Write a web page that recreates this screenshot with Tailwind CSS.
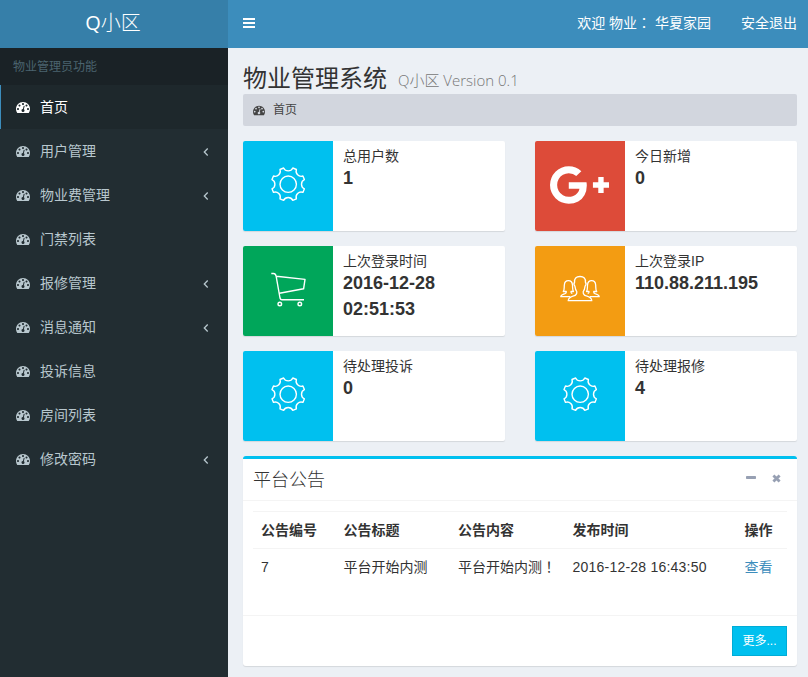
<!DOCTYPE html>
<html lang="zh-CN">
<head>
<meta charset="utf-8">
<title>Q小区</title>
<script src="https://cdn.jsdelivr.net/npm/@tailwindcss/browser@4"></script>
</head>
<body class="h-[677px] w-[808px] overflow-hidden bg-[#ecf0f5] font-['Liberation_Sans','Noto_Sans_CJK_SC',sans-serif] text-[14px] leading-[20px] text-[#333]">
<svg class="hidden">
  <symbol id="dash" viewBox="0 0 1792 1792"><path d="M384 1152q0-53-37.5-90.5t-90.5-37.5-90.5 37.5-37.5 90.5 37.5 90.5 90.5 37.5 90.5-37.5 37.5-90.5zm192-448q0-53-37.5-90.5t-90.5-37.5-90.5 37.5-37.5 90.5 37.5 90.5 90.5 37.5 90.5-37.5 37.5-90.5zm428 481l101-382q6-26-7.5-48.5t-38.5-29.5-48 6.5-30 39.5l-101 382q-60 5-107 43.5t-63 98.5q-20 77 20 146t117 89 146-20 89-117q16-60-6-117t-72-91zm660-33q0-53-37.5-90.5t-90.5-37.5-90.5 37.5-37.5 90.5 37.5 90.5 90.5 37.5 90.5-37.5 37.5-90.5zm-640-640q0-53-37.5-90.5t-90.5-37.5-90.5 37.5-37.5 90.5 37.5 90.5 90.5 37.5 90.5-37.5 37.5-90.5zm448 192q0-53-37.5-90.5t-90.5-37.5-90.5 37.5-37.5 90.5 37.5 90.5 90.5 37.5 90.5-37.5 37.5-90.5zm320 448q0 261-141 483-19 29-54 29h-1402q-35 0-54-29-141-221-141-483 0-182 71-348t191-286 286-191 348-71 348 71 286 191 191 286 71 348z"/></symbol>
  <symbol id="left" viewBox="0 0 6 10"><path d="M4.7 1.5 1.3 5l3.4 3.5" fill="none" stroke="currentColor" stroke-width="1.3"/></symbol>
  <symbol id="gear" viewBox="-45 -45 90 90"><g fill="none" stroke="#fff" stroke-width="1.4" stroke-linejoin="round" transform="translate(.2 -1.8)"><circle r="8.2"/><path d="M-4.6-16.2A5.1 5.1 0 0 0 4.6-16.2L8.2-14.7A5.1 5.1 0 0 0 14.7-8.2L16.200-4.6A5.1 5.1 0 0 0 16.2 4.6L14.7 8.2A5.1 5.1 0 0 0 8.2 14.7L4.6 16.2A5.1 5.1 0 0 0-4.6 16.2L-8.2 14.7A5.1 5.1 0 0 0-14.7 8.2L-16.2 4.6A5.1 5.1 0 0 0-16.2-4.6L-14.7-8.2A5.1 5.1 0 0 0-8.2-14.7Z"/></g></symbol>
</svg>

<div class="flex h-full flex-col">
  <header class="flex h-12 shrink-0 text-white">
    <div class="flex w-[228px] items-center justify-center bg-[#367fa9] pb-[2px] pr-[2px] font-['Open_Sans','Noto_Sans_CJK_SC',sans-serif] text-[20px] font-light"><span class="font-normal">Q</span>小区</div>
    <div class="flex flex-1 items-center justify-between bg-[#3c8dbc] pl-[15px] pr-[11px]">
      <svg class="mt-[-2px] h-[10px] w-3" viewBox="0 0 12 10" fill="#fff"><path d="M0 0h12v2H0zM0 4h12v2H0zM0 8h12v2H0z"/></svg>
      <div class="flex gap-[30px] pb-[2px]"><span class="whitespace-pre">欢迎 物业<span lang="zh-TW" class="font-['Noto_Sans_CJK_TC',sans-serif] leading-none">：</span> 华夏家园</span><span>安全退出</span></div>
    </div>
  </header>

  <div class="flex min-h-0 flex-1">
    <aside class="w-[228px] shrink-0 bg-[#222d32] text-[#b8c7ce]">
      <div class="flex h-[37px] items-center bg-[#1a2226] pl-[13px] text-[12px] text-[#4b646f]">物业管理员功能</div>
      <nav>
        <a class="flex h-11 items-center border-l border-[#3c8dbc] bg-[#1e282c] pl-[15px] pr-[19px] text-white"><svg class="mr-[10px] h-[14px] w-[14px] fill-current"><use href="#dash"/></svg><span class="flex-1">首页</span></a>
        <a class="flex h-11 items-center pl-4 pr-[19px]"><svg class="mr-[10px] h-[14px] w-[14px] fill-current"><use href="#dash"/></svg><span class="flex-1">用户管理</span><svg class="mt-px h-[10px] w-[6px]"><use href="#left"/></svg></a>
        <a class="flex h-11 items-center pl-4 pr-[19px]"><svg class="mr-[10px] h-[14px] w-[14px] fill-current"><use href="#dash"/></svg><span class="flex-1">物业费管理</span><svg class="mt-px h-[10px] w-[6px]"><use href="#left"/></svg></a>
        <a class="flex h-11 items-center pl-4 pr-[19px]"><svg class="mr-[10px] h-[14px] w-[14px] fill-current"><use href="#dash"/></svg><span class="flex-1">门禁列表</span></a>
        <a class="flex h-11 items-center pl-4 pr-[19px]"><svg class="mr-[10px] h-[14px] w-[14px] fill-current"><use href="#dash"/></svg><span class="flex-1">报修管理</span><svg class="mt-px h-[10px] w-[6px]"><use href="#left"/></svg></a>
        <a class="flex h-11 items-center pl-4 pr-[19px]"><svg class="mr-[10px] h-[14px] w-[14px] fill-current"><use href="#dash"/></svg><span class="flex-1">消息通知</span><svg class="mt-px h-[10px] w-[6px]"><use href="#left"/></svg></a>
        <a class="flex h-11 items-center pl-4 pr-[19px]"><svg class="mr-[10px] h-[14px] w-[14px] fill-current"><use href="#dash"/></svg><span class="flex-1">投诉信息</span></a>
        <a class="flex h-11 items-center pl-4 pr-[19px]"><svg class="mr-[10px] h-[14px] w-[14px] fill-current"><use href="#dash"/></svg><span class="flex-1">房间列表</span></a>
        <a class="flex h-11 items-center pl-4 pr-[19px]"><svg class="mr-[10px] h-[14px] w-[14px] fill-current"><use href="#dash"/></svg><span class="flex-1">修改密码</span><svg class="mt-px h-[10px] w-[6px]"><use href="#left"/></svg></a>
      </nav>
    </aside>

    <main class="flex-1 pl-[15px] pr-[11px] pt-[15px]">
      <h1 class="flex h-[31px] items-baseline font-['Open_Sans','Noto_Sans_CJK_SC',sans-serif] text-[24px] leading-[30px]">物业管理系统<small class="relative top-[-1px] ml-[11px] text-[15px] font-light text-[#777]">Q小区 Version 0.1</small></h1>
      <div class="flex h-8 items-center rounded-[2px] bg-[#d2d6de] pl-[10px] text-[12px] text-[#444]"><svg class="mr-2 h-3 w-3 fill-current"><use href="#dash"/></svg><span>首页</span></div>

      <section class="mt-[15px] grid grid-cols-2 gap-x-[30px] gap-y-[15px]">
        <div class="flex h-[90px] overflow-hidden rounded-[2px] bg-white shadow-[0_1px_1px_rgba(0,0,0,0.1)]">
          <svg class="h-[90px] w-[90px] bg-[#00c0ef]"><use href="#gear"/></svg>
          <div class="flex-1 px-[10px] pt-[5px]"><div>总用户数</div><b class="-mt-px block text-[18px] leading-[26px]">1</b></div>
        </div>
        <div class="flex h-[90px] overflow-hidden rounded-[2px] bg-white shadow-[0_1px_1px_rgba(0,0,0,0.1)]">
          <div class="flex w-[90px] items-center justify-center bg-[#dd4b39] pb-[3px] pr-px"><svg class="h-[46px] w-[59px]" viewBox="0 0 2304 1792" fill="#fff"><path d="M1437 913q0 208-87 370.5t-248 254-369 91.5q-149 0-285-58t-234-156-156-234-58-285 58-285 156-234 234-156 285-58q286 0 491 192l-199 191q-117-113-292-113-123 0-227.5 62t-165.5 168.5-61 232.5 61 232.5 165.5 168.5 227.5 62q83 0 152.5-23t114.5-57.5 78.5-78.5 49-83 21.5-74h-416v-252h692q12 63 12 122zm867-122v210h-209v209h-210v-209h-209v-210h209v-209h210v209h209z"/></svg></div>
          <div class="flex-1 px-[10px] pt-[5px]"><div>今日新增</div><b class="-mt-px block text-[18px] leading-[26px]">0</b></div>
        </div>
        <div class="flex h-[90px] overflow-hidden rounded-[2px] bg-white shadow-[0_1px_1px_rgba(0,0,0,0.1)]">
          <svg class="h-[90px] w-[90px] bg-[#00a65a]" viewBox="0 0 90 90" fill="none" stroke="#fff" stroke-width="1.4" stroke-linejoin="round"><path d="M28.3 27.5h2.2q2 0 2.6 2.5L37 52q.4 1.8 2 1.8h22M33.4 30.2 62 33.4 60.6 42.8 36.5 47.3"/><circle cx="36.8" cy="58" r="1.8"/><circle cx="56.8" cy="58" r="1.8"/></svg>
          <div class="flex-1 px-[10px] pt-[5px]"><div>上次登录时间</div><b class="-mt-px block text-[18px] leading-[26px]">2016-12-28<br>02:51:53</b></div>
        </div>
        <div class="flex h-[90px] overflow-hidden rounded-[2px] bg-white shadow-[0_1px_1px_rgba(0,0,0,0.1)]">
          <svg class="h-[90px] w-[90px] bg-[#f39c12]" viewBox="0 0 90 90" fill="none" stroke="#fff" stroke-width="1.3" stroke-linejoin="round"><path d="M33.200 54.700h23.600c-.3-3.200-2.500-4-5.500-4.800-2.800-.8-3.300-1.700-3.100-4.200 1.400-1.700 1.600-3.200 1.900-5.500 1-1.300 1.200-3 .3-4 .4-3.800-1.500-5.700-5.400-5.700s-5.800 1.900-5.400 5.700c-.9 1-.7 2.700.3 4 .3 2.300.5 3.800 1.900 5.500.2 2.500-.3 3.400-3.100 4.200-3 .8-5.200 1.600-5.500 4.800Z"/><path d="M35.200 50.700h-9.400c.5-2 2-2.400 4.200-3 1.200-.4 1.500-.8 1.300-2.200h-3c1.200-1.600.8-3.500 1-6.300.2-3.100 1.700-4.500 4.100-4.500s3.900 1.400 4.100 4.500c.2 2.800-.2 4.700 1 6.300h-2.500c-.3 1.400.1 1.800 1.300 2.200M54.800 50.700h9.400c-.5-2-2-2.400-4.200-3-1.200-.4-1.500-.8-1.300-2.200h3c-1.200-1.600-.8-3.500-1-6.300-.2-3.100-1.700-4.500-4.100-4.500s-3.900 1.400-4.100 4.500c-.2 2.800.2 4.700-1 6.300h2.500c.3 1.400-.1 1.800-1.300 2.200"/></svg>
          <div class="flex-1 px-[10px] pt-[5px]"><div>上次登录IP</div><b class="-mt-px block text-[18px] leading-[26px]">110.88.211.195</b></div>
        </div>
        <div class="flex h-[90px] overflow-hidden rounded-[2px] bg-white shadow-[0_1px_1px_rgba(0,0,0,0.1)]">
          <svg class="h-[90px] w-[90px] bg-[#00c0ef]"><use href="#gear"/></svg>
          <div class="flex-1 px-[10px] pt-[5px]"><div>待处理投诉</div><b class="-mt-px block text-[18px] leading-[26px]">0</b></div>
        </div>
        <div class="flex h-[90px] overflow-hidden rounded-[2px] bg-white shadow-[0_1px_1px_rgba(0,0,0,0.1)]">
          <svg class="h-[90px] w-[90px] bg-[#00c0ef]"><use href="#gear"/></svg>
          <div class="flex-1 px-[10px] pt-[5px]"><div>待处理报修</div><b class="-mt-px block text-[18px] leading-[26px]">4</b></div>
        </div>
      </section>

      <section class="mt-[15px] flex h-[210px] flex-col rounded-[3px] border-t-[3px] border-[#00c0ef] bg-white shadow-[0_1px_1px_rgba(0,0,0,0.1)]">
        <div class="flex h-[42px] shrink-0 items-center border-b border-[#f4f4f4] pl-[10px] pr-4">
          <h3 class="flex-1 text-[18px] font-light text-[#333]">平台公告</h3>
          <svg class="mr-[16px] mt-[-4px] h-[3px] w-[10px]" viewBox="0 0 10 3"><rect width="10" height="3" rx=".7" fill="#97a0b3"/></svg>
          <svg class="mt-[-2px] h-[9px] w-[9px]" viewBox="0 0 9 9"><path d="m1.400 1.400 6.200 6.200m0-6.200L1.400 7.600" stroke="#97a0b3" stroke-width="2.800"/></svg>
        </div>
        <div class="flex-1 px-[10px] pt-[10px]">
          <table class="w-full table-fixed border-collapse text-left">
            <colgroup><col class="w-[82.500px]"><col class="w-[114.5px]"><col class="w-[114.5px]"><col class="w-[172px]"><col></colgroup>
            <tr class="h-[37px] border-t border-[#f4f4f4]"><th class="px-2">公告编号</th><th class="px-2">公告标题</th><th class="px-2">公告内容</th><th class="px-2">发布时间</th><th class="whitespace-nowrap pl-2">操作</th></tr>
            <tr class="h-[37px] border-t border-[#f4f4f4]"><td class="px-2">7</td><td class="px-2">平台开始内测</td><td class="whitespace-nowrap pl-2">平台开始内测<span lang="zh-TW" class="font-['Noto_Sans_CJK_TC',sans-serif] leading-none">！</span></td><td class="whitespace-nowrap px-2 tracking-[0.22px]">2016-12-28 16:43:50</td><td class="whitespace-nowrap pl-2 text-[#3c8dbc]">查看</td></tr>
          </table>
        </div>
        <div class="flex h-[51px] shrink-0 justify-end border-t border-[#f4f4f4] p-[10px]">
          <a class="flex h-[30px] w-[55px] items-center justify-center border border-[#00acd6] bg-[#00c0ef] text-[12px] text-white">更多...</a>
        </div>
      </section>
    </main>
  </div>
</div>
</body>
</html>
